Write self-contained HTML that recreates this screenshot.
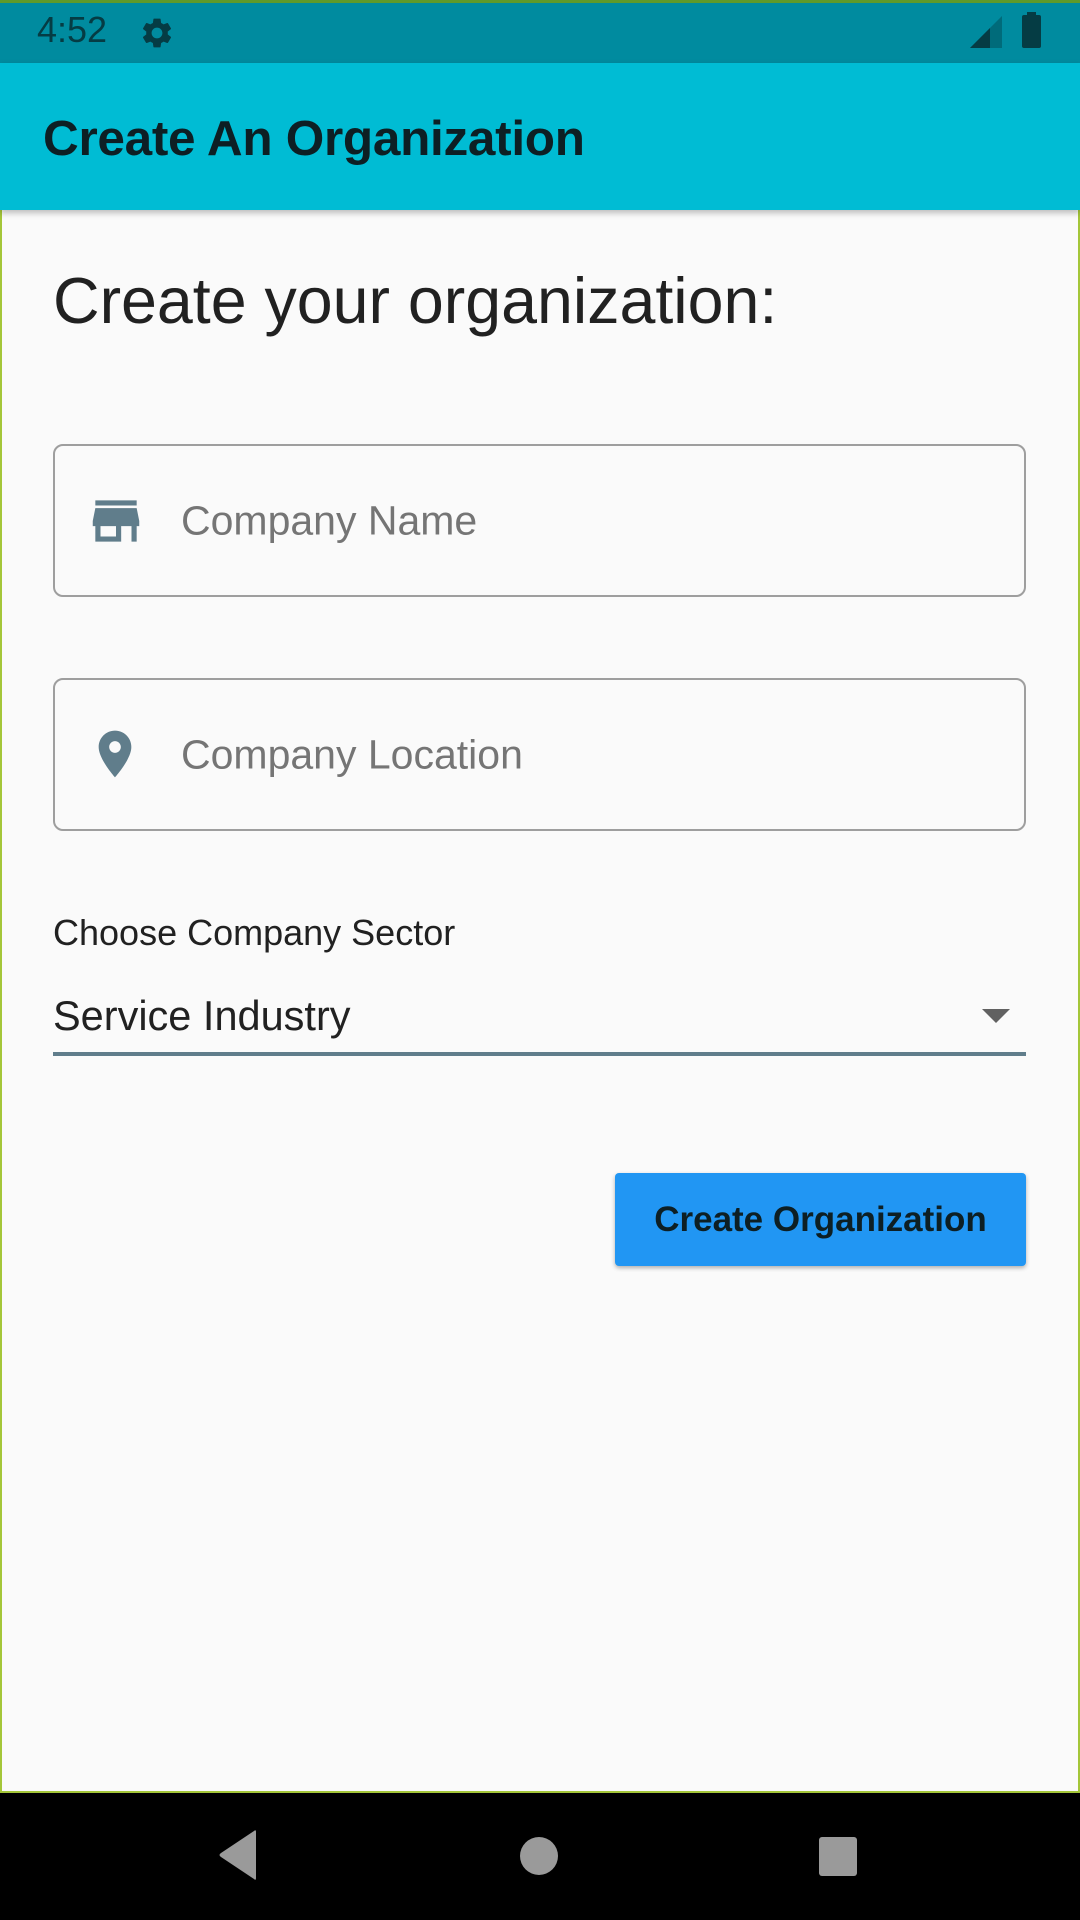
<!DOCTYPE html>
<html><head><meta charset="utf-8"><style>
*{margin:0;padding:0;box-sizing:border-box}
body{width:1080px;height:1920px;position:relative;overflow:hidden;background:#000;font-family:"Liberation Sans",sans-serif}
.screen{position:absolute;left:0;top:0;width:1080px;height:1793px;background:#fafafa;border:2px solid #a4c639;border-top:3px solid #6a9a2a}
.status{position:absolute;left:0;top:0;width:1080px;height:63px;background:#008b9f;border-top:3px solid #5f9a2a}
.appbar{position:absolute;left:0;top:63px;width:1080px;height:147px;background:#00bcd4;box-shadow:0 3px 6px rgba(0,0,0,.25)}
.abs{position:absolute}
.field{position:absolute;left:53px;width:973px;height:153px;border:2px solid #9e9e9e;border-radius:10px}
.ph{position:absolute;left:126px;top:50%;transform:translateY(-50%);font-size:41px;color:#757575}
</style></head><body>
<div class="screen"></div>
<div class="status">
 <div class="abs" style="left:37px;top:6px;font-size:36px;color:#053c44">4:52</div>
 <svg class="abs" style="left:139px;top:12px" width="36" height="36" viewBox="0 0 24 24"><path fill="#053c44" d="M19.14 12.94c.04-.3.06-.61.06-.94 0-.32-.02-.64-.07-.94l2.03-1.58c.18-.14.23-.41.12-.61l-1.92-3.32c-.12-.22-.37-.29-.59-.22l-2.39.96c-.5-.38-1.030-.7-1.62-.94l-.36-2.54c-.04-.24-.24-.41-.48-.41h-3.84c-.24 0-.43.17-.47.41l-.36 2.54c-.59.24-1.13.57-1.62.94l-2.39-.96c-.22-.08-.47 0-.59.22L2.74 8.87c-.12.21-.08.47.12.61l2.03 1.58c-.05.3-.09.63-.09.94s.02.64.07.94l-2.03 1.58c-.18.14-.23.41-.12.61l1.92 3.32c.12.22.37.29.59.22l2.39-.96c.5.38 1.03.7 1.62.94l.36 2.54c.05.24.24.41.48.41h3.840c.24 0 .44-.17.47-.41l.36-2.54c.59-.24 1.13-.56 1.62-.94l2.39.96c.22.08.47 0 .59-.22l1.92-3.32c.12-.22.07-.47-.12-.61l-2.01-1.58zM12 15.6c-1.98 0-3.6-1.62-3.6-3.6s1.62-3.6 3.6-3.6 3.6 1.62 3.6 3.6-1.62 3.6-3.6 3.6z"/></svg>
 <svg class="abs" style="left:970px;top:13px" width="32" height="32" viewBox="0 0 32 32"><polygon points="0,32 32,0 32,32" fill="#006b7a"/><polygon points="0,32 20,12 20,32" fill="#053c44"/></svg>
 <div class="abs" style="left:1022px;top:12px;width:19px;height:33px;background:#053c44;border-radius:2px"></div>
 <div class="abs" style="left:1027px;top:9px;width:9px;height:4px;background:#053c44"></div>
</div>
<div class="appbar">
 <div class="abs" style="left:43px;top:47px;font-size:49.5px;font-weight:bold;color:#0d1f24;letter-spacing:-0.3px">Create An Organization</div>
</div>
<div class="abs" style="left:53px;top:264px;font-size:64.5px;color:#212121">Create your organization:</div>
<div class="field" style="top:444px">
 <svg class="abs" style="left:30px;top:44px" width="62" height="62" viewBox="0 0 24 24"><path fill="#607d8b" d="M20 4H4v2h16V4zm1 10v-2l-1-5H4l-1 5v2h1v6h10v-6h4v6h2v-6h1zm-9 4H6v-4h6v4z"/></svg>
 <div class="ph">Company Name</div>
</div>
<div class="field" style="top:678px">
 <svg class="abs" style="left:32px;top:46px" width="56" height="56" viewBox="0 0 24 24"><path fill="#607d8b" d="M12 2C8.13 2 5 5.13 5 9c0 5.25 7 13 7 13s7-7.75 7-13c0-3.87-3.13-7-7-7zm0 9.5c-1.38 0-2.5-1.12-2.5-2.5s1.12-2.5 2.5-2.5 2.5 1.12 2.5 2.5-1.12 2.5-2.5 2.5z"/></svg>
 <div class="ph">Company Location</div>
</div>
<div class="abs" style="left:53px;top:912px;font-size:36px;color:#212121">Choose Company Sector</div>
<div class="abs" style="left:53px;top:992px;font-size:41.5px;color:#212121">Service Industry</div>
<svg class="abs" style="left:982px;top:1009px" width="28" height="15" viewBox="0 0 28 15"><polygon points="0,0 28,0 14,14" fill="#616161"/></svg>
<div class="abs" style="left:53px;top:1052px;width:973px;height:4px;background:#607d8b"></div>
<div class="abs" style="left:615px;top:1173px;width:411px;height:93px;background:#2196f3;border-radius:4px;box-shadow:0 2px 4px rgba(0,0,0,.3);font-size:35px;font-weight:bold;color:#0d1f24;text-align:center;line-height:93px">Create Organization</div>
<svg class="abs" style="left:0;top:1793px" width="1080" height="127"><path d="M256 39 L256 85 Q256 88 254 86 L221 64 Q218 62 221 60 L254 38 Q256 36 256 39 Z" fill="#9a9a9a"/><circle cx="539" cy="63" r="19" fill="#9a9a9a"/><rect x="819" y="44" width="38" height="39" rx="3" fill="#9a9a9a"/></svg>
</body></html>
